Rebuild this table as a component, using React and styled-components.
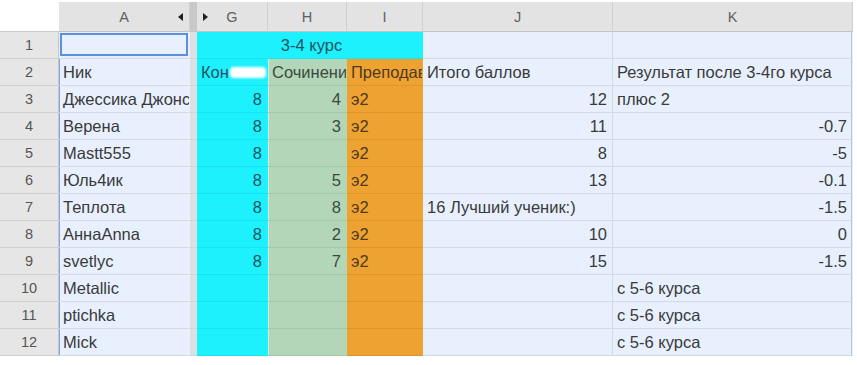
import React from "react";
import styled, { createGlobalStyle, css } from "styled-components";

const Global = createGlobalStyle`
  html, body { margin: 0; padding: 0; background: #fff; }
  body { font-family: "Liberation Sans", Arial, sans-serif; }
`;

const COLS = "59px 131px 7px 71px 79px 76px 190px 240px";

const Sheet = styled.div`
  display: grid;
  grid-template-columns: ${COLS};
  grid-template-rows: 30px repeat(12, 27px);
  margin-top: 2px;
  width: 853px;
`;

const Corner = styled.div`
  background: #fff;
  border-bottom: 1px solid #c9c9c9;
`;

const ColHead = styled.div`
  position: relative;
  background: #e3e3e3;
  border-right: 1px solid #cfcfcf;
  border-bottom: 1px solid #c4c4c4;
  box-sizing: border-box;
  display: flex;
  align-items: center;
  justify-content: center;
  color: #5f5f5f;
  font-size: 14.5px;
`;

const Arrow = styled.span`
  position: absolute;
  top: 50%;
  ${(p) => (p.$side === "left" ? "right: 6px;" : "left: 6px;")}
  transform: translateY(-50%);
  width: 0;
  height: 0;
  border-top: 4px solid transparent;
  border-bottom: 4px solid transparent;
  ${(p) =>
    p.$side === "left"
      ? "border-right: 5px solid #202020;"
      : "border-left: 5px solid #202020;"}
`;

const Divider = styled.div`
  background: ${(p) => (p.$head ? "#c9c9c9" : "#dcdfe4")};
  border-bottom: 1px solid ${(p) => (p.$head ? "#c4c4c4" : "#d0d5de")};
  box-sizing: border-box;
`;

const RowHead = styled.div`
  background: #e6e6e6;
  border-right: 1px solid #c6c6c6;
  border-bottom: 1px solid #cfcfcf;
  box-sizing: border-box;
  display: flex;
  align-items: center;
  justify-content: center;
  color: #555;
  font-size: 14.5px;
`;

const palette = {
  blue: { bg: "#e8f0fe", line: "#d3dae6", color: "#3a3a3a" },
  cyan: { bg: "#1ef1fe", line: "rgba(0,60,80,0.07)", color: "#1f5560" },
  green: { bg: "#b3d6b8", line: "rgba(0,40,20,0.08)", color: "#3b4a41" },
  orange: { bg: "#eea232", line: "rgba(80,40,0,0.09)", color: "#4f3a1e" },
};

const Cell = styled.div`
  position: relative;
  box-sizing: border-box;
  background: ${(p) => palette[p.$tone].bg};
  color: ${(p) => palette[p.$tone].color};
  border-bottom: 1px solid ${(p) => palette[p.$tone].line};
  border-right: 1px solid ${(p) => (p.$vline ? "#d3dae6" : "transparent")};
  font-size: 16.5px;
  white-space: nowrap;
  overflow: hidden;
  display: flex;
  align-items: center;
  justify-content: ${(p) =>
    p.$align === "right" ? "flex-end" : p.$align === "center" ? "center" : "flex-start"};
  padding: 0 ${(p) => (p.$align === "right" ? "5px" : "0")} 0
    ${(p) => (p.$align === "right" ? "0" : "4px")};
  ${(p) => p.$span && css`grid-column: span ${p.$span};`}
  ${(p) => p.$leftEdge && css`box-shadow: inset 1px 0 0 #7fa6e8;`}
  ${(p) => p.$rightEdge && css`box-shadow: inset -1px 0 0 #a9c3ee;`}
  ${(p) =>
    p.$selected &&
    css`
      &::after {
        content: "";
        position: absolute;
        inset: 1px 1px 2px 1px;
        border: 2px solid #5b8fe0;
      }
    `}
  ${(p) => p.$lightLeft && css`box-shadow: inset 1px 0 0 rgba(255,255,255,0.5);`}
`;

const Blob = styled.span`
  display: inline-block;
  width: 36px;
  height: 11px;
  margin-left: 1px;
  background: #fff;
  border-radius: 4px;
  filter: blur(1.2px);
`;

const heads = ["A", "G", "H", "I", "J", "K"];

const rows = [
  { name: "", g: "", h: "", i: "", j: "", k: "" },
  { name: "Ник", g: "Кон", h: "Сочинение", i: "Преподаватель", j: "Итого баллов", jl: true, k: "Результат после 3-4го курса", kl: true, gl: true, hl: true },
  { name: "Джессика Джонс", g: "8", h: "4", i: "э2", j: "12", k: "плюс 2", kl: true },
  { name: "Верена", g: "8", h: "3", i: "э2", j: "11", k: "-0.7" },
  { name: "Mastt555", g: "8", h: "", i: "э2", j: "8", k: "-5" },
  { name: "Юль4ик", g: "8", h: "5", i: "э2", j: "13", k: "-0.1" },
  { name: "Теплота", g: "8", h: "8", i: "э2", j: "16 Лучший ученик:)", jl: true, k: "-1.5" },
  { name: "АннаAnna", g: "8", h: "2", i: "э2", j: "10", k: "0" },
  { name: "svetlyc", g: "8", h: "7", i: "э2", j: "15", k: "-1.5" },
  { name: "Metallic", g: "", h: "", i: "", j: "", k: "с 5-6 курса", kl: true },
  { name: "ptichka", g: "", h: "", i: "", j: "", k: "с 5-6 курса", kl: true },
  { name: "Mick", g: "", h: "", i: "", j: "", k: "с 5-6 курса", kl: true },
];

export default function App() {
  return (
    <>
      <Global />
      <Sheet>
        <Corner />
        <ColHead>
          A<Arrow $side="left" />
        </ColHead>
        <Divider $head />
        <ColHead>
          <Arrow $side="right" />G
        </ColHead>
        <ColHead>H</ColHead>
        <ColHead>I</ColHead>
        <ColHead>J</ColHead>
        <ColHead>K</ColHead>

        {rows.map((r, idx) => {
          const n = idx + 1;
          if (idx === 0) {
            return (
              <React.Fragment key={n}>
                <RowHead>{n}</RowHead>
                <Cell $tone="blue" $selected />
                <Divider />
                <Cell $tone="cyan" $span={3} $align="center">
                  3-4 курс
                </Cell>
                <Cell $tone="blue" $vline />
                <Cell $tone="blue" $rightEdge />
              </React.Fragment>
            );
          }
          return (
            <React.Fragment key={n}>
              <RowHead>{n}</RowHead>
              <Cell $tone="blue" $leftEdge>{r.name}</Cell>
              <Divider />
              <Cell $tone="cyan" $align={r.gl ? "left" : "right"}>
                {r.g}
                {idx === 1 && <Blob />}
              </Cell>
              <Cell $tone="green" $align={r.hl ? "left" : "right"} $lightLeft>
                {r.h}
              </Cell>
              <Cell $tone="orange">{r.i}</Cell>
              <Cell $tone="blue" $vline $align={r.jl ? "left" : "right"}>
                {r.j}
              </Cell>
              <Cell $tone="blue" $rightEdge $align={r.kl ? "left" : "right"}>
                {r.k}
              </Cell>
            </React.Fragment>
          );
        })}
      </Sheet>
    </>
  );
}
